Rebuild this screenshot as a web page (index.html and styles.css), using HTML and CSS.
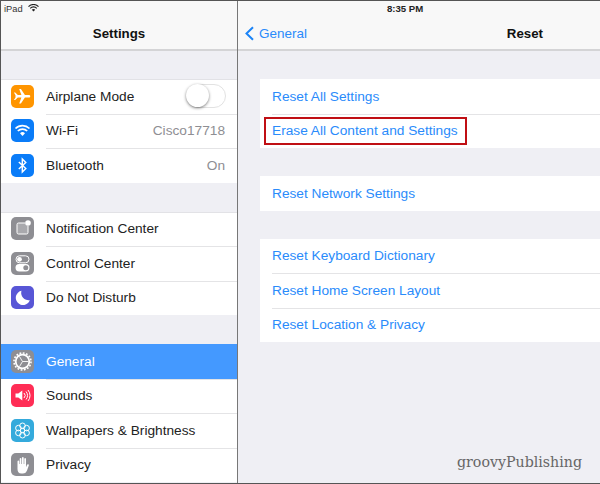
FILE: index.html
```html
<!DOCTYPE html>
<html lang="en">
<head>
    <meta charset="UTF-8">
    <title>Settings - Reset</title>
    <link rel="stylesheet" href="styles.css">
</head>
<body>
    <div class="ipad">
        <!-- Colonne de gauche -->
        <aside class="sidebar">
            <header class="nav">
                <div class="status">
                    <span>iPad</span>
                    <svg class="wifi-small" width="11" height="8" viewBox="0 0 11 8"><path d="M.5 2.6a7 7 0 0 1 10 0M2.2 4.3a4.6 4.6 0 0 1 6.6 0" fill="none" stroke="#222" stroke-width="1.2"/><path d="M3.8 5.8a2.4 2.4 0 0 1 3.4 0L5.5 7.6z" fill="#222"/></svg>
                </div>
                <h1 class="nav-title">Settings</h1>
            </header>

            <ul class="group">
                <li class="row">
                    <span class="icon orange">
                        <svg width="23" height="23" viewBox="0 0 23 23"><path d="M4.500 10.200l-1.600-2.700h1.300l2.600 2.600 3.600-.1-2.200-6h1.700l4 6h4c1.800 0 1.800 2.600 0 2.600h-4l-4 6H8.200l2.200-6-3.600-.1-2.600 2.600H2.900l1.600-2.700z" fill="#fff"/></svg>
                    </span>
                    <span class="label">Airplane Mode</span>
                    <span class="switch"><span class="knob"></span></span>
                </li>
                <li class="row">
                    <span class="icon blue">
                        <svg width="23" height="23" viewBox="0 0 23 23"><path d="M4.500 9.500a10 10 0 0 1 14 0M6.800 12a6.700 6.700 0 0 1 9.400 0" fill="none" stroke="#fff" stroke-width="1.700"/><path d="M9 14.300a3.500 3.500 0 0 1 5 0l-2.500 2.700z" fill="#fff"/></svg>
                    </span>
                    <span class="label">Wi-Fi</span>
                    <span class="value">Cisco17718</span>
                </li>
                <li class="row">
                    <span class="icon blue">
                        <svg width="23" height="23" viewBox="0 0 23 23"><path d="M7.800 8l7 6.500-3.500 3.500V5l3.500 3.500-7 6.500" fill="none" stroke="#fff" stroke-width="1.400"/></svg>
                    </span>
                    <span class="label">Bluetooth</span>
                    <span class="value">On</span>
                </li>
            </ul>

            <ul class="group">
                <li class="row">
                    <span class="icon gray">
                        <svg width="23" height="23" viewBox="0 0 23 23"><path d="M14 6H7.500A1.500 1.500 0 0 0 6 7.500v8A1.500 1.500 0 0 0 7.500 17h8a1.500 1.500 0 0 0 1.500-1.500V9" fill="#a9a9ad" stroke="#fff" stroke-width="1"/><circle cx="17" cy="6" r="2.800" fill="#fff"/></svg>
                    </span>
                    <span class="label">Notification Center</span>
                </li>
                <li class="row">
                    <span class="icon gray">
                        <svg width="23" height="23" viewBox="0 0 23 23"><rect x="5" y="3.800" width="13" height="7" rx="3.500" fill="none" stroke="#fff" stroke-width="1"/><circle cx="8.500" cy="7.300" r="2.400" fill="#fff"/><rect x="4.500" y="12" width="14" height="7.500" rx="3.700" fill="#fff"/><circle cx="14.800" cy="15.700" r="2.500" fill="#8e8e93"/></svg>
                    </span>
                    <span class="label">Control Center</span>
                </li>
                <li class="row">
                    <span class="icon indigo">
                        <svg width="23" height="23" viewBox="0 0 23 23"><path d="M10.500 4.800a7.200 7.200 0 1 0 8.300 9.400 7.400 7.400 0 0 1-8.300-9.400z" fill="#fff"/></svg>
                    </span>
                    <span class="label">Do Not Disturb</span>
                </li>
            </ul>

            <ul class="group">
                <li class="row selected">
                    <span class="icon gray">
                        <svg width="23" height="23" viewBox="0 0 23 23"><circle cx="11.500" cy="11.500" r="6.800" fill="none" stroke="#fff" stroke-width="1.800"/><circle cx="11.500" cy="11.500" r="8.500" fill="none" stroke="#fff" stroke-width="1.600" stroke-dasharray="1.800 1.540"/><path d="M11.500 11.500L8.500 6.500M11.500 11.500L8.500 16.500M11.500 11.500h6" stroke="#fff" stroke-width=".9"/></svg>
                    </span>
                    <span class="label">General</span>
                </li>
                <li class="row">
                    <span class="icon red">
                        <svg width="23" height="23" viewBox="0 0 23 23"><path d="M4.500 9.500h2.800l4-3v10l-4-3H4.500z" fill="#fff"/><path d="M13 9a3.500 3.500 0 0 1 0 5M15 7.500a6 6 0 0 1 0 8M17 6a8.500 8.500 0 0 1 0 11" fill="none" stroke="#fff" stroke-width="1"/></svg>
                    </span>
                    <span class="label">Sounds</span>
                </li>
                <li class="row">
                    <span class="icon sky">
                        <svg width="23" height="23" viewBox="0 0 23 23" fill="none" stroke="#fff" stroke-width="1"><circle cx="11.500" cy="11.500" r="2.300"/><circle cx="11.500" cy="6.800" r="2.800"/><circle cx="11.500" cy="16.200" r="2.800"/><circle cx="7.400" cy="9.100" r="2.800"/><circle cx="15.600" cy="9.100" r="2.800"/><circle cx="7.400" cy="13.900" r="2.800"/><circle cx="15.600" cy="13.900" r="2.800"/></svg>
                    </span>
                    <span class="label">Wallpapers &amp; Brightness</span>
                </li>
                <li class="row">
                    <span class="icon gray">
                        <svg width="23" height="23" viewBox="0 0 23 23"><path d="M6.500 8.500c0-1.200 1.700-1.200 1.700 0V11h.5V5.800c0-1.200 1.700-1.200 1.700 0V11h.6V4.800c0-1.200 1.700-1.200 1.700 0V11h.6V6c0-1.200 1.700-1.200 1.700 0v8.200l1-2.300c.5-1.200 2.200-.6 1.800.6l-1.700 4.700c-.7 2-2 3.300-4.300 3.300h-1.300c-3 0-4-2-4-4.500z" fill="#fff"/></svg>
                    </span>
                    <span class="label">Privacy</span>
                </li>
            </ul>
        </aside>

        <!-- Colonne de droite -->
        <main class="detail">
            <header class="nav">
                <div class="status status-time">8:35 PM</div>
                <div class="nav-bar">
                    <span class="back">
                        <svg width="11" height="15" viewBox="0 0 11 15"><path d="M9 1.200L2.500 7.500 9 13.800" fill="none" stroke="#1b84f7" stroke-width="2"/></svg>
                        General
                    </span>
                    <h1 class="nav-title">Reset</h1>
                </div>
            </header>

            <ul class="group card">
                <li class="row"><span class="link">Reset All Settings</span></li>
                <li class="row"><span class="link boxed">Erase All Content and Settings</span></li>
            </ul>
            <ul class="group card">
                <li class="row"><span class="link">Reset Network Settings</span></li>
            </ul>
            <ul class="group card">
                <li class="row"><span class="link">Reset Keyboard Dictionary</span></li>
                <li class="row"><span class="link">Reset Home Screen Layout</span></li>
                <li class="row"><span class="link">Reset Location &amp; Privacy</span></li>
            </ul>

            <div class="watermark">groovyPublishing</div>
        </main>
    </div>
</body>
</html>
```

FILE: styles.css
```css
* {
    box-sizing: border-box;
}

body {
    margin: 0;
    font-family: "Liberation Sans", Arial, sans-serif;
    color: #222;
}

.ipad {
    display: flex;
    width: 600px;
    height: 484px;
    overflow: hidden;
    background-color: #efeff4;
    border-top: 1px solid #555;
    border-left: 1px solid #555;
    border-bottom: 1px solid #555;
}

.sidebar {
    width: 237px;
    flex-shrink: 0;
    border-right: 1px solid #777;
}

.detail {
    flex: 1;
    position: relative;
}

.nav {
    height: 50px;
    background-color: #f8f8f8;
    border-bottom: 2px solid #d4d4d6;
}

.status {
    display: flex;
    align-items: center;
    gap: 5px;
    height: 14px;
    padding: 1px 0 0 3px;
    font-size: 9.300px;
    color: #333;
}

.status-time {
    padding-left: 149px;
    font-size: 9.600px;
    font-weight: bold;
    color: #222;
}

.wifi-small {
    margin-top: -1px;
}

.nav-title {
    margin: 11px 0 0;
    font-size: 13.300px;
    font-weight: bold;
    text-align: center;
    color: #111;
}

.nav-bar {
    display: flex;
    justify-content: space-between;
    padding: 0 57px 0 6px;
}

.back {
    display: flex;
    align-items: center;
    gap: 4px;
    margin-top: 10px;
    height: 16px;
    font-size: 13.500px;
    color: #2a8bfb;
}

.group {
    list-style: none;
    margin: 29px 0 0;
    padding: 0;
    background-color: #fff;
    box-shadow: inset 0 1px #e2e2e6;
}

.nav + .group {
    margin-top: 28px;
}

.row {
    display: flex;
    align-items: center;
    height: 34.500px;
    padding: 0 12px 0 10px;
    font-size: 13.700px;
    position: relative;
}

.row + .row::before {
    content: "";
    position: absolute;
    top: 0;
    left: 45px;
    right: 0;
    height: 1px;
    background-color: #e4e4e6;
}

.icon {
    display: flex;
    width: 23px;
    height: 23px;
    flex-shrink: 0;
    margin-right: 12px;
    border-radius: 5px;
}

.orange { background-color: #ff9500; }
.blue { background-color: #0a7cf8; }
.gray { background-color: #8e8e93; }
.indigo { background-color: #5856d6; }
.red { background-color: #ff2d55; }
.sky { background-color: #34aadc; }

.label {
    flex: 1;
}

.value {
    color: #8e8e93;
}

.selected {
    background-color: #4499ff;
    color: #fff;
}

.switch {
    display: block;
    width: 40px;
    height: 24px;
    margin-right: -1px;
    background-color: #fff;
    border: 1px solid #e2e2e2;
    border-radius: 12px;
}

.knob {
    display: block;
    width: 23px;
    height: 23px;
    margin: -1px 0 0 -1px;
    background-color: #fff;
    border-radius: 50%;
    box-shadow: 0 1px 3px rgba(0, 0, 0, 0.5);
}

.card {
    margin: 28px 0 0 22px;
    box-shadow: none;
}

.card .row {
    padding-left: 12px;
}

.card .row + .row::before {
    left: 12px;
}

.link {
    color: #2a8bfb;
}

.boxed {
    padding: 4px 7px 4px 6px;
    margin-left: -8px;
    border: 2px solid #c00f14;
    line-height: 16px;
}

.watermark {
    position: absolute;
    right: 18px;
    bottom: 13px;
    font-family: "DejaVu Serif", serif;
    font-size: 14.200px;
    color: #666;
}
```
